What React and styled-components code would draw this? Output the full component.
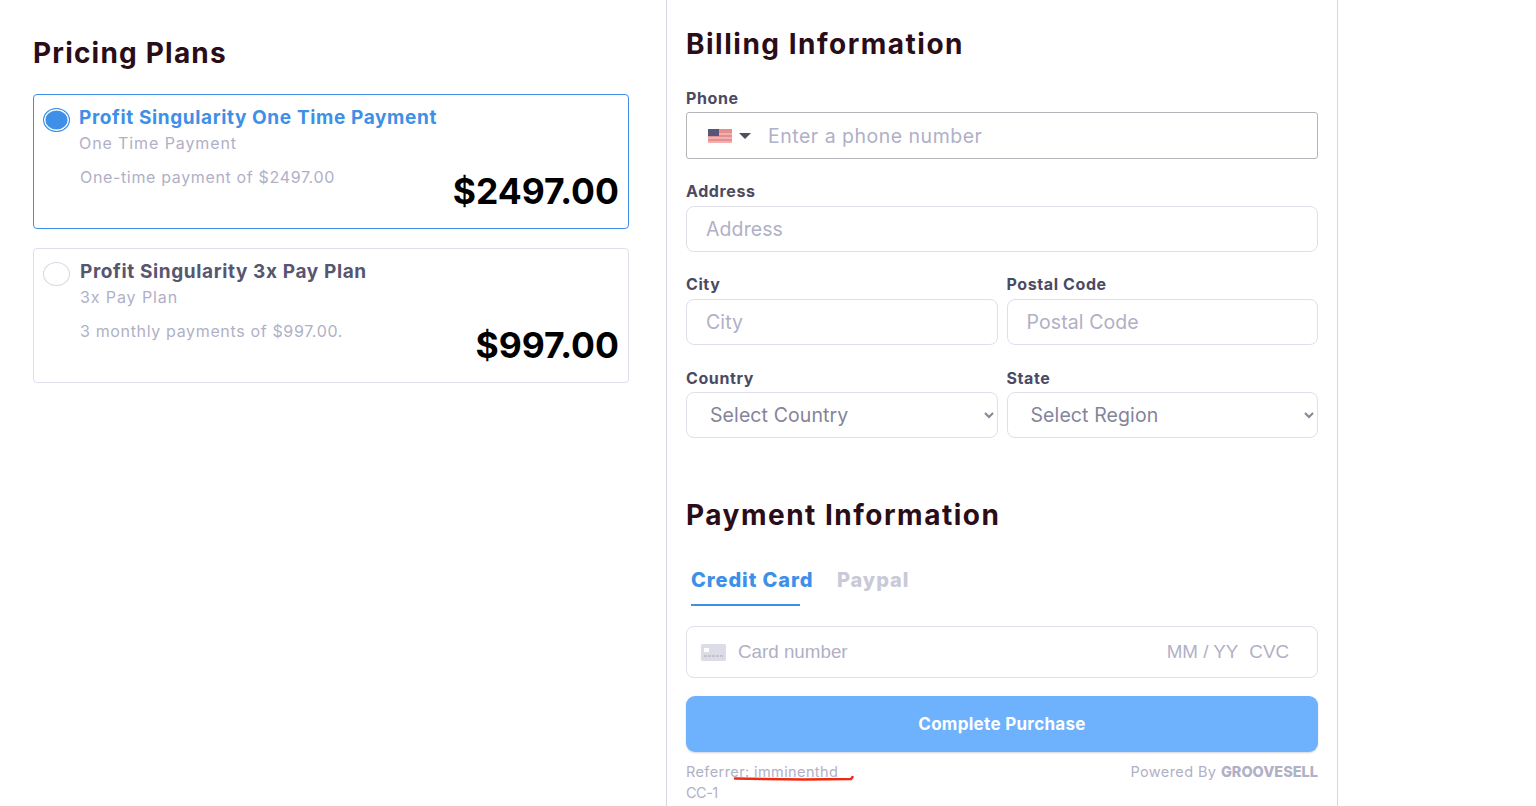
import React from 'react';
import styled, { createGlobalStyle } from 'styled-components';

const GlobalStyle = createGlobalStyle`
  * { box-sizing: border-box; }
  html, body { margin: 0; padding: 0; height: 806px; overflow: hidden; background: #fff; }
  body { font-family: Inter, "Open Sans", "Liberation Sans", sans-serif; }
`;

const Page = styled.div`
  display: flex;
  width: 1536px;
  height: 806px;
  overflow: hidden;
`;

const PlansColumn = styled.section`
  width: 666px;
  padding: 35px 37px 0 33px;
`;

const BillingColumn = styled.section`
  position: relative;
  width: 672px;
  height: 806px;
  padding: 26px 19px 0;
  border-left: 1px solid #d6d6e2;
  border-right: 1px solid #d6d6e2;
`;

const Heading = styled.h2`
  margin: 0;
  font-size: 28px;
  line-height: 36px;
  font-weight: 700;
  letter-spacing: ${(p) => (p.$wide ? '1.5px' : '1.2px')};
  color: #2a0d17;
`;

const PaymentHeading = styled(Heading)`
  margin-top: 59px;
`;

const PlanList = styled.div`
  display: flex;
  flex-direction: column;
  gap: 19px;
  margin-top: 23px;
`;

const PlanCard = styled.div`
  position: relative;
  height: 135px;
  padding: 10px 10px 0 46px;
  border: 1px solid ${(p) => (p.$active ? '#3d8fe8' : '#dfdfea')};
  border-radius: 4px;
`;

const Radio = styled.span`
  position: absolute;
  left: 9px;
  top: 13px;
  width: 27px;
  height: 24px;
  border-radius: 50%;
  border: 1px solid ${(p) => (p.$active ? '#3d8fe8' : '#d8d8e4')};
  background: ${(p) => (p.$active ? '#3d8fe8' : '#fff')};
  box-shadow: ${(p) => (p.$active ? 'inset 0 0 0 1.5px #fff' : 'none')};
`;

const PlanName = styled.div`
  margin-left: ${(p) => (p.$active ? '-1px' : '0')};
  font-size: 19px;
  line-height: 26px;
  font-weight: 700;
  letter-spacing: 0.62px;
  color: ${(p) => (p.$active ? '#3d8fe8' : '#57566f')};
`;

const PlanType = styled.div`
  margin: 2px 0 0 ${(p) => (p.$active ? '-1px' : '0')};
  font-size: 16px;
  line-height: 20px;
  letter-spacing: 0.9px;
  color: #b0b0c6;
`;

const PlanNote = styled.div`
  margin-top: 14px;
  font-size: 16px;
  line-height: 20px;
  letter-spacing: 0.65px;
  color: #b0b0c6;
`;

const Price = styled.div`
  position: absolute;
  right: 9px;
  bottom: 14px;
  font-size: 35.5px;
  line-height: 44px;
  font-weight: 700;
  color: #000;
`;

const Field = styled.div`
  min-width: 0;
`;

const FieldRow = styled.div`
  display: grid;
  grid-template-columns: ${(p) => (p.$single ? '1fr' : '1fr 1fr')};
  column-gap: 9px;
  margin-top: ${(p) => p.$top || '22px'};
`;

const Label = styled.label`
  display: block;
  margin-bottom: ${(p) => (p.$tight ? '4px' : '5px')};
  font-size: 16px;
  line-height: 20px;
  font-weight: 700;
  letter-spacing: 0.6px;
  color: #4b4a63;
`;

const TextInput = styled.input`
  display: block;
  width: 100%;
  height: 46px;
  padding: 0 19px;
  border: 1px solid #dfdfea;
  border-radius: 8px;
  background: #fff;
  outline: none;
  font-family: inherit;
  font-size: 19.5px;
  letter-spacing: 0.1px;
  color: #4b4a63;

  &::placeholder { color: #b0b0c6; opacity: 1; }
`;

const PhoneBox = styled.div`
  display: flex;
  align-items: center;
  height: 47px;
  padding-left: 21px;
  border: 1px solid #b4b4ba;
  border-radius: 3px;
`;

const PhoneInput = styled.input`
  flex: 1;
  min-width: 0;
  margin-left: 15px;
  border: 0;
  outline: none;
  background: transparent;
  font-family: inherit;
  font-size: 19.5px;
  letter-spacing: 0.5px;

  &::placeholder { color: #b0b0c6; opacity: 1; }
`;

const Caret = styled.span`
  width: 0;
  height: 0;
  margin-left: 7px;
  border-left: 6px solid transparent;
  border-right: 6px solid transparent;
  border-top: 6px solid #4f4f60;
`;

const Dropdown = styled.select`
  display: block;
  width: 100%;
  height: 46px;
  padding: 0 0 0 19px;
  border: 1px solid #dfdfea;
  border-radius: 8px;
  background: #fff;
  outline: none;
  font-family: inherit;
  font-size: 19.5px;
  letter-spacing: 0.1px;
  color: #85849a;
`;

const Tabs = styled.div`
  display: flex;
  gap: 37px;
  margin-top: 30px;
  padding-left: 5px;
`;

const Tab = styled.div`
  width: ${(p) => (p.$active ? '109px' : 'auto')};
  height: 43px;
  padding-top: 4px;
  font-size: 20px;
  line-height: 26px;
  font-weight: 800;
  letter-spacing: 0.9px;
  white-space: nowrap;
  color: ${(p) => (p.$active ? '#3d8fe8' : '#c9c9d8')};
  border-bottom: ${(p) => (p.$active ? '2px solid #3d8fe8' : '0')};
`;

const CardBox = styled.div`
  display: flex;
  align-items: center;
  height: 52px;
  margin-top: 20px;
  padding: 0 28px 0 14px;
  border: 1px solid #dfdfea;
  border-radius: 8px;
  font-family: "Liberation Sans", Arial, sans-serif;
  font-size: 18.8px;
  color: #b0b0c6;
`;

const CardNumber = styled.span`
  flex: 1;
  margin-left: 12px;
`;

const CardMeta = styled.span`
  margin-left: 11px;
`;

const PayButton = styled.button`
  display: block;
  width: 100%;
  height: 56px;
  margin-top: 18px;
  border: 0;
  border-radius: 9px;
  background: #6eb2fd;
  box-shadow: 0 1px 2px rgba(80, 90, 120, 0.25);
  font-family: inherit;
  font-size: 17px;
  font-weight: 700;
  letter-spacing: 0.3px;
  color: #fff;
`;

const FootRow = styled.div`
  display: flex;
  justify-content: space-between;
  margin-top: 10px;
  font-size: 14.5px;
  line-height: 20px;
  letter-spacing: 0.4px;
  color: #b0b0c6;
`;

const FootNote = styled.div`
  margin-top: 1px;
  font-size: 14.5px;
  line-height: 20px;
  letter-spacing: -0.5px;
  color: #b0b0c6;
`;

const Brand = styled.b`
  font-weight: 800;
  letter-spacing: 0;
`;

// red pen stroke somebody drew over the referrer line
const Scribble = styled.svg`
  position: absolute;
  left: 66px;
  top: 774px;
`;

const FlagIcon = () => (
  <svg width="24" height="14" viewBox="0 0 24 14">
    <rect width="24" height="14" fill="#e68d8d" />
    <rect y="4" width="24" height="2" fill="#f0b0b0" />
    <rect y="8" width="24" height="2" fill="#f0b0b0" />
    <rect y="12" width="24" height="2" fill="#f0b0b0" />
    <rect width="11" height="7" fill="#56567a" />
  </svg>
);

const CardIcon = () => (
  <svg width="25" height="17" viewBox="0 0 25 17">
    <rect width="25" height="17" rx="1.5" fill="#dcdce6" />
    <rect x="3" y="4" width="5" height="4" fill="#fff" />
    <path d="M3 12h19" stroke="#a9a9bd" strokeWidth="1" strokeDasharray="3 1" />
  </svg>
);

const plans = [
  { name: 'Profit Singularity One Time Payment', type: 'One Time Payment', note: 'One-time payment of $2497.00', price: '$2497.00', active: true },
  { name: 'Profit Singularity 3x Pay Plan', type: '3x Pay Plan', note: '3 monthly payments of $997.00.', price: '$997.00' },
];

const App = () => (
  <Page>
    <GlobalStyle />
    <PlansColumn>
      <Heading>Pricing Plans</Heading>
      <PlanList>
        {plans.map((plan) => (
          <PlanCard key={plan.name} $active={plan.active}>
            <Radio $active={plan.active} />
            <PlanName $active={plan.active}>{plan.name}</PlanName>
            <PlanType $active={plan.active}>{plan.type}</PlanType>
            <PlanNote>{plan.note}</PlanNote>
            <Price>{plan.price}</Price>
          </PlanCard>
        ))}
      </PlanList>
    </PlansColumn>

    <BillingColumn>
      <Heading $wide>Billing Information</Heading>
      <FieldRow $single $top="26px">
        <Field>
          <Label $tight>Phone</Label>
          <PhoneBox>
            <FlagIcon />
            <Caret />
            <PhoneInput placeholder="Enter a phone number" />
          </PhoneBox>
        </Field>
      </FieldRow>
      <FieldRow $single>
        <Field>
          <Label>Address</Label>
          <TextInput placeholder="Address" />
        </Field>
      </FieldRow>
      <FieldRow>
        <Field>
          <Label>City</Label>
          <TextInput placeholder="City" />
        </Field>
        <Field>
          <Label>Postal Code</Label>
          <TextInput placeholder="Postal Code" />
        </Field>
      </FieldRow>
      <FieldRow $top="23px">
        <Field>
          <Label $tight>Country</Label>
          <Dropdown defaultValue="">
            <option value="">Select Country</option>
          </Dropdown>
        </Field>
        <Field>
          <Label $tight>State</Label>
          <Dropdown defaultValue="">
            <option value="">Select Region</option>
          </Dropdown>
        </Field>
      </FieldRow>

      <PaymentHeading $wide>Payment Information</PaymentHeading>
      <Tabs>
        <Tab $active>Credit Card</Tab>
        <Tab>Paypal</Tab>
      </Tabs>
      <CardBox>
        <CardIcon />
        <CardNumber>Card number</CardNumber>
        <span>MM / YY</span>
        <CardMeta>CVC</CardMeta>
      </CardBox>
      <PayButton>Complete Purchase</PayButton>
      <FootRow>
        <span>Referrer: imminenthd</span>
        <span>Powered By <Brand>GROOVESELL</Brand></span>
      </FootRow>
      <FootNote>CC-1</FootNote>
      <Scribble width="122" height="8" viewBox="0 0 122 8">
        <path d="M2 4.5 C40 5.5 90 5.5 118 5 L119.5 3" fill="none" stroke="#f02a10" strokeWidth="2.5" strokeLinecap="round" />
      </Scribble>
    </BillingColumn>
  </Page>
);

export default App;
